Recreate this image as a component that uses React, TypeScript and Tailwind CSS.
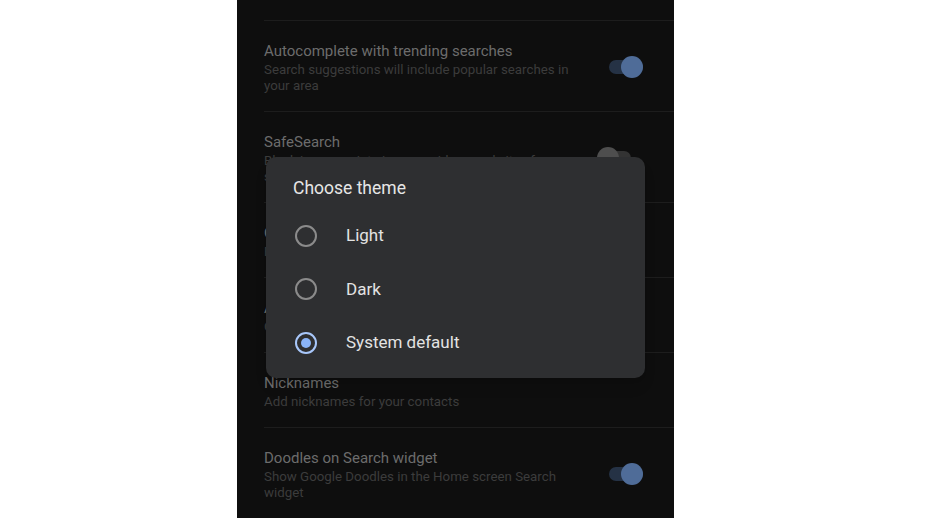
import * as React from "react";

interface SettingRowProps {
    title: string;
    subtitle: string;
    toggle?: "on" | "off";
}

function Toggle({ on }: { on: boolean }) {
    return (
        <div className="relative w-[36px] h-[22px] shrink-0">
            <div
                className={`absolute top-[4px] h-[14px] rounded-full ${on ? "left-[2px] w-[34px] bg-[#253245]" : "left-[-6px] w-[30px] bg-[#333333]"}`}
            />
            <div
                className={`absolute top-0 h-[22px] w-[22px] rounded-full ${on ? "right-0 bg-[#4f6c98]" : "left-[-10px] bg-[#4e4e4e]"}`}
            />
        </div>
    );
}

function SettingRow({ title, subtitle, toggle }: SettingRowProps) {
    return (
        <div className="ml-[27px] border-t border-[#1d1d1d] pt-[19px] pb-[17px] pr-[31px] flex items-center">
            <div className="flex-1 min-w-0">
                <div className="text-[15px] leading-[22px] text-[#6c6c6c]">{title}</div>
                <div className="text-[13.3px] leading-[16px] text-[#3c3c3c] max-w-[320px]">{subtitle}</div>
            </div>
            {toggle && <Toggle on={toggle === "on"} />}
        </div>
    );
}

function Radio({ checked }: { checked: boolean }) {
    if (checked) {
        return (
            <div className="w-[22px] h-[22px] rounded-full border-[2px] border-[#a8c7fa] flex items-center justify-center">
                <div className="w-[10px] h-[10px] rounded-full bg-[#8ab4f8]" />
            </div>
        );
    }
    return <div className="w-[22px] h-[22px] rounded-full border-[2px] border-[#8b8b8b]" />;
}

export default function App() {
    const options = [
        { label: "Light", checked: false },
        { label: "Dark", checked: false },
        { label: "System default", checked: true },
    ];

    return (
        <div className="w-[931px] h-[518px] bg-white pl-[237px] font-['Roboto',sans-serif]">
            <div className="relative w-[437px] h-[518px] bg-[#0e0e0e] overflow-hidden">
                <div className="h-[20px]" />
                <SettingRow
                    title="Autocomplete with trending searches"
                    subtitle="Search suggestions will include popular searches in your area"
                    toggle="on"
                />
                <SettingRow
                    title="SafeSearch"
                    subtitle="Block inappropriate images, videos and sites from search results"
                    toggle="off"
                />
                <SettingRow title="Open web pages in the Google app" subtitle="Faster browsing, more control" />
                <SettingRow title="Autoplay video previews" subtitle="Only over Wi-Fi" />
                <SettingRow title="Nicknames" subtitle="Add nicknames for your contacts" />
                <SettingRow
                    title="Doodles on Search widget"
                    subtitle="Show Google Doodles in the Home screen Search widget"
                    toggle="on"
                />
                <div className="ml-[27px] border-t border-[#1d1d1d]" />

                {/* theme dialog */}
                <div className="absolute left-[29px] top-[157px] w-[379px] h-[221px] rounded-[10px] bg-[#2e2f31] shadow-lg">
                    <div className="pl-[27px] pt-[19px] text-[17.5px] leading-[24px] text-[#e6e6e6]">
                        Choose theme
                    </div>
                    <div className="mt-[9px]">
                        {options.map((o) => (
                            <div key={o.label} className="h-[53.5px] flex items-center pl-[29px]">
                                <Radio checked={o.checked} />
                                <span className="ml-[29px] text-[17px] text-[#e3e3e3]">{o.label}</span>
                            </div>
                        ))}
                    </div>
                </div>
            </div>
        </div>
    );
}
